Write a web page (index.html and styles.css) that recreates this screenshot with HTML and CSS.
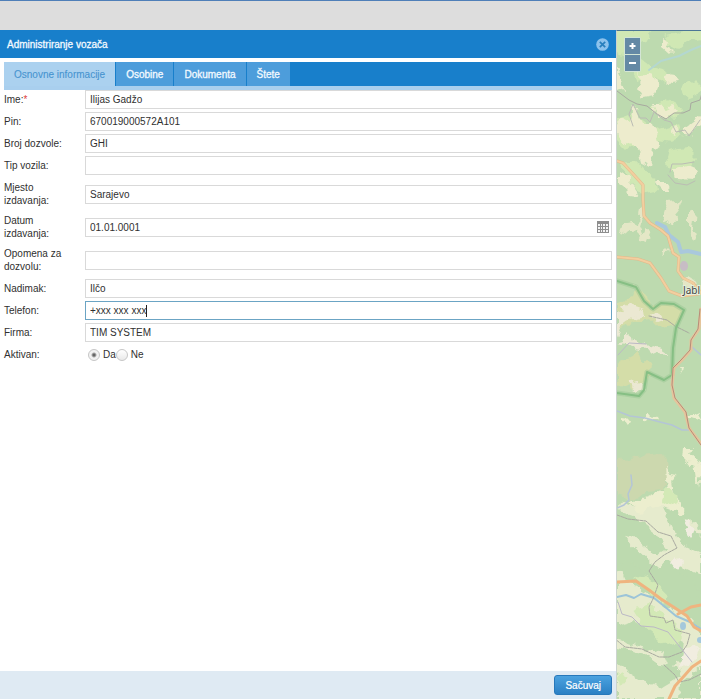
FILE: index.html
```html
<!DOCTYPE html>
<html lang="bs">
<head>
<meta charset="utf-8">
<meta name="viewport" content="width=device-width, initial-scale=1">
<title>Administriranje vozača</title>
<link rel="stylesheet" href="styles.css">
</head>
<body>
<header class="topbar"></header>
<main class="workspace">
  <section class="panel">
    <div class="panel-head">
      <h1>Administriranje vozača</h1>
      <button class="close" type="button" aria-label="Zatvori">
        <svg viewBox="0 0 13 13" width="13" height="13"><circle cx="6.5" cy="6.5" r="6.3" fill="#8cc2ec"/><path d="M3.8 3.8l5.4 5.4M9.2 3.8L3.8 9.2" stroke="#287fbd" stroke-width="1.7"/></svg>
      </button>
    </div>
    <div class="panel-body">
      <nav class="tabs">
        <button class="tab active" type="button">Osnovne informacije</button>
        <button class="tab" type="button">Osobine</button>
        <button class="tab" type="button">Dokumenta</button>
        <button class="tab" type="button">Štete</button>
      </nav>
      <form class="form" id="driver">
        <div class="group">
          <div class="row"><label for="ime">Ime:<span class="required">*</span></label><input id="ime" type="text" value="Ilijas Gadžo"></div>
          <div class="row"><label for="pin">Pin:</label><input id="pin" type="text" value="670019000572A101"></div>
          <div class="row"><label for="dozvola">Broj dozvole:</label><input id="dozvola" type="text" value="GHI"></div>
          <div class="row"><label for="tip">Tip vozila:</label><input id="tip" type="text"></div>
        </div>
        <div class="group">
          <div class="row tall"><label for="mjesto">Mjesto izdavanja:</label><input id="mjesto" type="text" value="Sarajevo"></div>
          <div class="row tall"><label for="datum">Datum izdavanja:</label>
            <div class="date"><input id="datum" type="text" value="01.01.0001">
              <button class="calendar" type="button" aria-label="Kalendar">
                <svg viewBox="0 0 12 12" width="12" height="12"><path d="M0 0h12v12H0z" fill="#8e8e8e"/><path d="M1 3h2v2H1zM4 3h1v2H4zM6 3h2v2H6zM9 3h2v2H9zM1 6h2v2H1zM4 6h1v2H4zM6 6h2v2H6zM9 6h2v2H9zM1 9h2v2H1zM4 9h1v2H4zM6 9h2v2H6zM9 9h2v2H9z" fill="#f3f3f3"/></svg>
              </button>
            </div>
          </div>
          <div class="row tall"><label for="opomena">Opomena za dozvolu:</label><input id="opomena" type="text"></div>
        </div>
        <div class="group">
          <div class="row"><label for="nadimak">Nadimak:</label><input id="nadimak" type="text" value="Ilčo"></div>
          <div class="row"><label for="telefon">Telefon:</label><div class="phone"><input id="telefon" class="focused" type="text" value="+xxx xxx xxx"><i class="caret"></i></div></div>
          <div class="row"><label for="firma">Firma:</label><input id="firma" type="text" value="TIM SYSTEM"></div>
          <div class="row" role="radiogroup" aria-labelledby="aktivan"><span class="label" id="aktivan">Aktivan:</span>
            <div class="radios">
              <label><input type="radio" name="aktivan" checked>Da</label>
              <label><input type="radio" name="aktivan">Ne</label>
            </div>
          </div>
        </div>
      </form>
    </div>
    <footer class="panel-foot"><button class="save" type="submit" form="driver">Sačuvaj</button></footer>
  </section>
  <aside class="map">
    <svg class="tiles" viewBox="617 31 84 668" preserveAspectRatio="xMinYMin slice" aria-hidden="true">
      <defs>
        <filter id="rough" x="-5%" y="-5%" width="110%" height="110%"><feTurbulence type="fractalNoise" baseFrequency=".11" numOctaves="2" seed="4" result="n"/><feDisplacementMap in="SourceGraphic" in2="n" scale="11" xChannelSelector="R" yChannelSelector="G"/></filter>
      </defs>
      <path fill="#bddaaf" d="M610 20h100v690H610z"/>
      <g filter="url(#rough)">
        <path fill="#d0e8b4" d="M617 30h38l-6 9-12 6-8 12-12-4zM664 35l20-5h20v10l-15 2-9 8-12-4zM628 64l14-5 10 7 14 4 5 9-12 3-9-4-12 3zM683 85l12-5 8 8-6 9-9 2-7-6zM652 108l14-9 16 9-6 10-15-2zM617 119l17-6 15 12-4 16-18 8-10-10zM655 130l23-6 4 11-14 8-14-3zM668 150l20-3 10 10-9 13-19 1-4-11zM620 163l18-2 17 18 2 13-15 3-15-18z"/>
        <path fill="#edeccd" d="M638 72l15 5 5 9-4 9-10 2-5-8 4-6zM662 37l7 4-2 7 7 3-4 4-8-7zM668 73l7 4 4 5-7 1-7-5zM617 68l5 10 3 15-8-4zM621 118l10 5 3-19 5 12 4 8 10 0 4 10 3 11-7 3-3 18-9-5-4-14-8-1-10-11-5-5zM652 104l10 0 4 5 6-3 4 5-7 8-12-3zM674 126l5 4-4 5-5-3zM684 128l16-12v6l-8 13-8-1zM618 172l10 6 11 17-7-1-14-11zM656 183l11 0 3 8-9 0zM674 169l12-3 12 5-5 9-16-1z"/>
        <path fill="#e4e7c6" d="M669 202l13-2-3 8-5 6 5 7-7 5-9-5zM690 212l5-2-2 18 7 6-5 7-5-8zM640 208l5 3-5 16 4 9-7-2zM623 223l11-2 6 8-8 5-12-3zM646 228l4 2-5 12-5-1zM664 249l4 4-6 3zM683 280l6-2 8 5-4 5-9-2zM634 283l5 1-5 4z"/>
        <path fill="#d4dda8" d="M617 305l15-8 4-10 12 8 3 14 10-6 21 5-3 15-20 5-7-8-18 2-17 8zM617 364l15-7 6-10 5 14 10 5-1 9-19 14-16-8z"/>
        <path fill="#ebe8d2" d="M617 310l14-5 14 5 1 6-17 4-8 6-4 12zM627 334l6 5 12 5 15 5 9 6-13-1-9-5-14-2-10-7zM617 344l7-2 0-9 6 6-7 6zM630 383l10-3 7 10-12 3zM652 314l6-1 5 7-6 2z"/>
        <path fill="#ccd8ae" d="M617 462l21-6 24-2 6 13-4 23-17 2-14 9-16-5z"/>
        <path fill="#eceece" d="M628 504l19-6 16-7 14 6 7 14-9 8-19-7-13 4zM665 465l5 9 5 1-4 7 2 12-6 0zM684 447l10 0-5 7 8 5 5 6-12 1-7-8zM622 418l8 1-2 5-6-2zM645 416l12 1-2 4-10-1zM678 368l4 0-1 6zM687 417l14-6-2 10zM696 464l6 0-3 24z"/>
        <path fill="#e6ebcd" d="M617 503l25 8 20-7 39 25v46l-35-15-8 9-39-38zM617 570l28 11 19 25 22 8 15 17v68h-84z"/>
        <path fill="#bddaaf" d="M663 507l17 7 21 23v17l-18-9-9-15zM617 510l15 5 21 16 14 19-10 6-24-19-16-2zM620 560l18 5 22 25 9 12-22-9-22-12zM617 625l15-4 20 7 19 15-9 10-19-5-26-9zM617 647l30 8 14 10 16 2 4 8-20 12-21-8-23-14zM670 632l15 8-2 20-15 8-5-12zM679 573l15 4 9 20-14-2-14-14zM680 683l20-16v31h-21z"/>
        <path fill="#d3e9b6" d="M636 580l10-5 23 22-4 7zM633 610l16-5 26 19 8 15-16 7-24-20zM665 488l14 8-4 12-13-7zM617 672l10 6-7 9z"/>
        <path fill="#f1ede0" d="M675 555l8 8-5 8-8-9zM688 520l6 9-3 9-7-9zM686 649l14-2-8 15-14 8z"/>
      </g>
      <g fill="none" stroke-linecap="round" stroke-linejoin="round">
        <path stroke="#b4d7d0" stroke-width="2" d="M649 70l12-9 18-5 12-6 10-4"/>
        <path stroke="#b4c5d6" stroke-width="1.5" d="M617 411l13 5 15 2 15 4 12 3 10 5 8 0M631 475l1 10-4 9 1 6-5 5-7 3M692 347l9 8"/>
        <path stroke="#a9c8dc" stroke-width="4" d="M657 223l8 4 4 8 9 7 3 10 7-1 13 3"/>
        <path stroke="#9cc4d8" stroke-width="2" d="M617 597l9-2 8 3 7-4 13 4 10 8 12 10 14 6 11 7"/>
        <g stroke="#a8a9a0" stroke-width="1">
          <path d="M617 91l12 9 8 4 10 2 10 8 9 5 8-6 9 0 7-3 1-7 9-3 2-7"/>
          <path stroke="#bbbcb4" d="M633 126l-4-12 4-10 7 14 6 0 4 4 4-10 10 8 7 2 5 10 9-2 4 6 11-16M670 172l2-8 10 0 12-2M668 175l7 8 12 2 8-4"/>
          <path stroke-dasharray="3 1" d="M617 515l11 4 18 2 12 11 13 4 6 12-13 7-9 7-6 9 9 14-5 14-4 8 1 9 14 2 2 5 7-3 2 10 15 4-3 11-5 7-13 5-10 0-17-8-17-2-16-13M664 665l11 10 4 7 10-2 12-6M649 316l18 4 8 6 14 7"/>
          <path stroke="#bcb9c6" d="M618 602l4 12 10 3 9 9 13 1 14 5 12 15 12 15M618 355l11-12 17 1"/>
        </g>
        <path stroke="#91c48b" stroke-width="5" opacity=".4" d="M617 281l19 6 8 14 9 8 8-6 13 1 10 6-8 18-3 20-1 27-8 5-17-8-3 18-5 6-22-3"/>
        <path stroke="#86bf84" stroke-width="2" d="M617 281l19 6 8 14 9 8 8-6 13 1 10 6-8 18-3 20-1 27-8 5-17-8-3 18-5 6-22-3"/>
        <path stroke="#e3b78a" stroke-width="3" d="M617 161l6 2 11 12 9 10 0 15 1 16 6 7 11 7 7 6 5 17 6 4-1 14 5 7 10 5 8 10M617 257l21 2 12 4 11 15 8 13 13 5 16-2"/>
        <path stroke="#f2cf9f" stroke-width="2" d="M617 161l6 2 11 12 9 10 0 15 1 16 6 7 11 7 7 6 5 17 6 4-1 14 5 7 10 5 8 10M617 257l21 2 12 4 11 15 8 13 13 5 16-2"/>
        <path stroke="#e6c49c" stroke-width="3" d="M701 309l-2 20-8 11 0 10-9 10-8 8-2 17 2 13 11 14 4 16 13 17"/>
        <path stroke="#b58d78" stroke-width="1" d="M700 309l-2 20-7 11-1 10-9 10-8 8-1 17 3 13 11 14 3 16 12 17"/>
        <path stroke="#efb47f" stroke-width="3" d="M617 582l19-1 13 9 12 9 14 9 12 8 7 11 7 4M678 614l13-7 10-2M669 699l6-13 10-11 7-8 9-6"/>
      </g>
      <g fill="#a4c8db"><ellipse cx="683" cy="626" rx="3" ry="4"/><circle cx="700" cy="640" r="3"/></g>
      <ellipse cx="684" cy="266" rx="4" ry="5" fill="#c7bdc5"/>
      <text x="683" y="294" class="place">Jabl</text>
    </svg>
    <div class="zoom"><button type="button" aria-label="Približi"><svg viewBox="0 0 15 15" width="15" height="15"><path d="M7.5 4v6M4.5 7h6" stroke="#fff" stroke-width="2"/></svg></button><button type="button" aria-label="Udalji"><svg viewBox="0 0 15 15" width="15" height="15"><path d="M4 7h7" stroke="#fff" stroke-width="2"/></svg></button></div>
  </aside>
</main>
</body>
</html>
```
FILE: styles.css
```css
* { box-sizing: border-box; }
body {
  margin: 0;
  min-height: 100vh;
  display: flex;
  flex-direction: column;
  background: #fff;
  color: #303030;
  font: 10px/13px "Liberation Sans", Arial, sans-serif;
}
button, input { font: inherit; color: inherit; margin: 0; }
button { border: 0; padding: 0; background: none; }
.topbar {
  height: 30px;
  background: #ddd;
  border-top: 1px solid #4f7fb8;
}
.workspace { flex: 1; display: flex; }
.panel { flex: 1; min-width: 0; display: flex; flex-direction: column; }
.panel-head {
  height: 28px;
  padding: 0 7px;
  display: flex;
  align-items: center;
  justify-content: space-between;
  background: #187fcb;
  color: #f2f9ff;
  -webkit-text-stroke: .3px;
}
h1 { margin: 0; font-size: 10px; font-weight: 400; }
.close, .close svg { display: block; }
.panel-body { flex: 1; padding: 4px; }
.tabs {
  display: flex;
  gap: 1px;
  height: 28px;
  background: #187fcb;
  border-bottom: 4px solid #a9cfee;
}
.tab {
  height: 24px;
  padding: 0 10px;
  background: #4d9ddb;
  color: #f2f9ff;
  -webkit-text-stroke: .3px;
}
.tab.active { background: #abd1ef; color: #4794d0; -webkit-text-stroke: .1px; }
.form { display: flex; flex-direction: column; gap: 4px; }
.group { display: flex; flex-direction: column; gap: 3px; }
.row {
  display: grid;
  grid-template-columns: 81px minmax(0, 1fr);
  align-items: center;
  min-height: 19px;
}
.row.tall { min-height: 30px; }
.row > label { padding-right: 16px; }
.required { color: #e0433c; }
input[type="text"] {
  display: block;
  width: 100%;
  height: 19px;
  padding: 0 4px;
  border: 1px solid #d9d9d9;
  border-radius: 0;
  background: #fff;
  outline: 0;
}
input[type="text"].focused, input[type="text"]:focus { border-color: #6ba4c4; }
.date, .phone { position: relative; }
.calendar { position: absolute; right: 3px; top: 3px; }
.calendar svg { display: block; }
.caret { position: absolute; left: 61px; top: 4px; width: 1px; height: 12px; background: #222; }
.radios { display: flex; padding-left: 3px; }
.radios label { display: flex; align-items: center; gap: 3px; }
input[type="radio"] {
  appearance: none;
  width: 12px;
  height: 12px;
  border: 1px solid #c6c6c6;
  border-radius: 50%;
  background: linear-gradient(#fff, #e9e9e9);
}
input[type="radio"]:checked { background: radial-gradient(circle, #666 0 1px, #f2f2f2 3px); }
.panel-foot {
  height: 28px;
  padding: 0 4px;
  display: flex;
  align-items: center;
  justify-content: flex-end;
  background: #dfeaf3;
}
.save {
  height: 20px;
  padding: 0 10px;
  border: 1px solid #2778ba;
  border-radius: 3px;
  background: linear-gradient(#4ba2df, #2b80c4);
  color: #fff;
  -webkit-text-stroke: .2px;
}
.map {
  position: relative;
  flex: 0 0 85px;
  border-top: 1px solid #4c7796;
  border-left: 1px solid #ccd4cf;
  overflow: hidden;
  background: #bddaaf;
}
.tiles { position: absolute; inset: 0; width: 100%; height: 100%; }
.place { font: 10px "Noto Sans", sans-serif; fill: #444; stroke: #e6f0de; stroke-width: 2px; paint-order: stroke; }
.zoom {
  position: absolute;
  left: 7px;
  top: 6px;
  display: grid;
  gap: 1px;
  padding: 1px;
  background: #d3e5d5;
  border-radius: 2px;
}
.zoom button { width: 15px; height: 16px; background: #6489a5; }
.zoom svg { display: block; }
```
